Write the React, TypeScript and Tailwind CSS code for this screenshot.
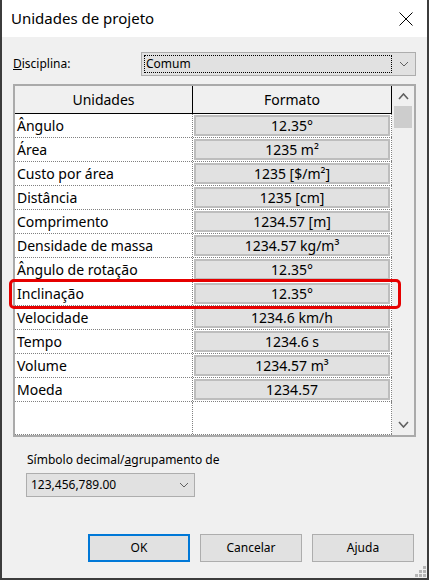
import React from "react";

const rows: [string, string][] = [
  ["Ângulo", "12.35°"],
  ["Área", "1235 m²"],
  ["Custo por área", "1235 [$/m²]"],
  ["Distância", "1235 [cm]"],
  ["Comprimento", "1234.57 [m]"],
  ["Densidade de massa", "1234.57 kg/m³"],
  ["Ângulo de rotação", "12.35°"],
  ["Inclinação", "12.35°"],
  ["Velocidade", "1234.6 km/h"],
  ["Tempo", "1234.6 s"],
  ["Volume", "1234.57 m³"],
  ["Moeda", "1234.57"],
];

function Chevron({ w = 9, h = 5, stroke = "#606060", sw = 1, up = false }: { w?: number; h?: number; stroke?: string; sw?: number; up?: boolean }) {
  return (
    <svg width={w + 2} height={h + 2} viewBox={`0 0 ${w + 2} ${h + 2}`}>
      <polyline
        points={up ? `1,${h + 1} ${(w + 2) / 2},1 ${w + 1},${h + 1}` : `1,1 ${(w + 2) / 2},${h + 1} ${w + 1},1`}
        fill="none"
        stroke={stroke}
        strokeWidth={sw}
      />
    </svg>
  );
}

export default function App() {
  return (
    <div
      className="w-[429px] h-[580px] bg-[#3c3c3c] px-[2px] pb-[2px] flex flex-col text-black"
      style={{ fontFamily: '"Noto Sans", "Open Sans", sans-serif' }}
    >
      <div className="relative flex-1 flex flex-col bg-[#f0f0f0]">
        {/* Title bar */}
        <div className="h-[37px] bg-white flex items-center justify-between pl-[9px] pr-[14px]">
          <span className="text-[15px] leading-none">Unidades de projeto</span>
          <svg width="14" height="14" viewBox="0 0 14 14">
            <path d="M0.5 0.5 L13.5 13.5 M13.5 0.5 L0.5 13.5" stroke="#000" strokeWidth="1" />
          </svg>
        </div>

        {/* Disciplina */}
        <div className="mt-[15px] flex items-center pl-[11px] h-[24px]">
          <span className="w-[128px] text-[12px]">
            <span className="underline">D</span>isciplina:
          </span>
          <div className="w-[275px] h-[24px] bg-[#e1e1e1] border border-[#adadad] flex items-center">
            <div className="ml-[2px] w-[248px] h-[18px] border border-dotted border-black flex items-center text-[12px] pl-[1px]">
              Comum
            </div>
            <div className="flex-1 flex items-center justify-center">
              <Chevron w={8} h={4} />
            </div>
          </div>
        </div>

        {/* Table */}
        <div className="mt-[8px] ml-[11px] w-[403px] h-[353px] border-2 border-[#aaaaaa] bg-white flex">
          <div className="w-[377px] flex flex-col">
            <div className="h-[28px] flex bg-[#f0f0f0] border-b border-black text-[14px]">
              <div className="w-[178px] border-r border-black flex items-center justify-center">Unidades</div>
              <div className="w-[199px] border-r border-black flex items-center justify-center">Formato</div>
            </div>
            {rows.map(([name, fmt]) => (
              <div key={name} className="h-[24px] flex border-b border-dotted border-[#808080] text-[14px]">
                <div className="w-[178px] border-r border-dotted border-[#808080] flex items-center pl-[2px] leading-none whitespace-nowrap">
                  {name}
                </div>
                <div className="w-[199px] border-r border-dotted border-[#808080] pt-[1px] pl-[1px] pr-[1px]">
                  <div className="h-[21px] bg-[#e1e1e1] border-2 border-[#bdbdbd] flex items-center justify-center leading-none whitespace-nowrap">
                    {fmt}
                  </div>
                </div>
              </div>
            ))}
            <div className="flex-1 flex border-b border-dotted border-[#808080]">
              <div className="w-[178px] border-r border-dotted border-[#808080]" />
              <div className="w-[199px] border-r border-dotted border-[#808080]" />
            </div>
          </div>
          <div className="flex-1 bg-[#f0f0f0] flex flex-col">
            <div className="h-[20px] flex items-center justify-center">
              <Chevron w={9} h={5} sw={1.6} up />
            </div>
            <div className="mx-[2px] h-[22px] bg-[#cdcdcd]" />
            <div className="flex-1" />
            <div className="h-[21px] flex items-center justify-center">
              <Chevron w={9} h={5} sw={1.6} />
            </div>
          </div>
        </div>

        {/* Decimal symbol */}
        <div className="mt-[15px] pl-[25px] text-[12px] leading-[16px]">
          Símbolo decimal/<span className="underline">a</span>grupamento de
        </div>
        <div className="mt-[5px] ml-[24px] w-[169px] h-[24px] bg-[#e1e1e1] border border-[#adadad] flex items-center justify-between pl-[4px] pr-[5px] text-[12px]">
          <span>123,456,789.00</span>
          <Chevron w={8} h={4} />
        </div>

        {/* Buttons */}
        <div className="mt-[37px] flex justify-end gap-[10px] pr-[13px] text-[12px]">
          <div className="w-[102px] h-[28px] bg-[#e1e1e1] border-2 border-[#0078d7] flex items-center justify-center">OK</div>
          <div className="w-[102px] h-[28px] bg-[#e1e1e1] border border-[#adadad] flex items-center justify-center">Cancelar</div>
          <div className="w-[102px] h-[28px] bg-[#e1e1e1] border border-[#adadad] flex items-center justify-center">Ajuda</div>
        </div>

        {/* Red highlight */}
        <div className="absolute left-[7px] top-[279px] w-[392px] h-[30px] border-[3px] border-[#e60000] rounded-[5px] pointer-events-none" />

        {/* Size grip */}
        <svg className="absolute right-[1px] bottom-[1px]" width="11" height="11" viewBox="0 0 11 11">
          <rect x="8" y="0" width="3" height="3" fill="#b5b5b5" />
          <rect x="4" y="4" width="3" height="3" fill="#b5b5b5" />
          <rect x="8" y="4" width="3" height="3" fill="#b5b5b5" />
          <rect x="0" y="8" width="3" height="3" fill="#b5b5b5" />
          <rect x="4" y="8" width="3" height="3" fill="#b5b5b5" />
          <rect x="8" y="8" width="3" height="3" fill="#b5b5b5" />
        </svg>
      </div>
    </div>
  );
}
